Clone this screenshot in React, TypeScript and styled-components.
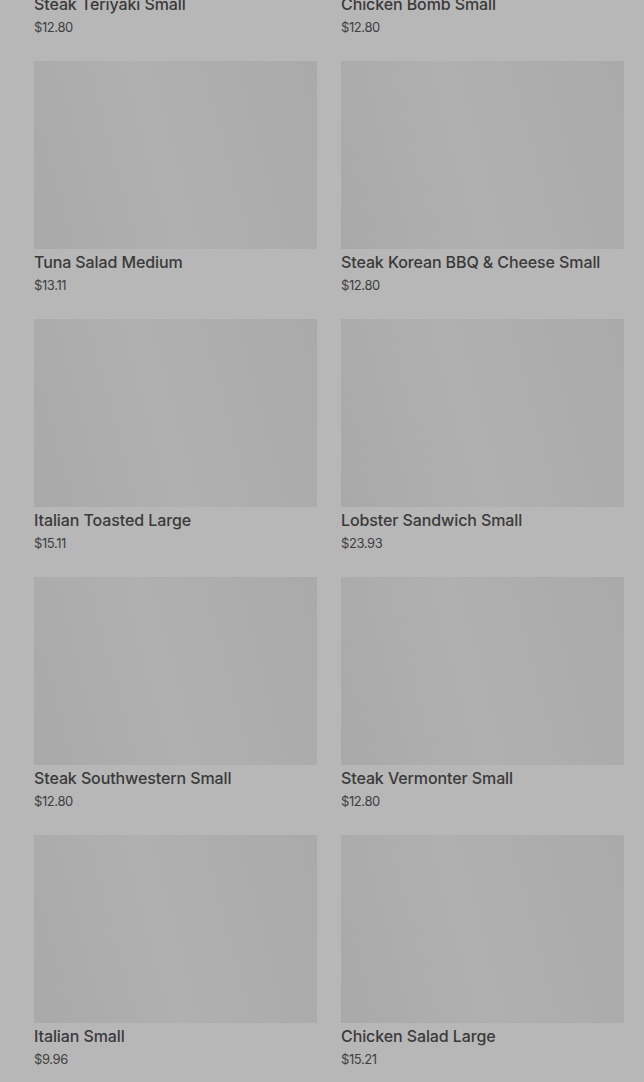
import React from "react";
import styled, { createGlobalStyle } from "styled-components";

const Global = createGlobalStyle`
  html, body { margin: 0; padding: 0; background: #b7b7b7; overflow: hidden; }
  body { font-family: Inter, "Noto Sans", sans-serif; }
`;

const Page = styled.div`
  background: #b7b7b7;
  height: 1082px;
  overflow: hidden;
`;

const Grid = styled.div`
  display: grid;
  grid-template-columns: 283px 283px;
  column-gap: 24px;
  row-gap: 25px;
  padding: 0 20px 0 34px;
  margin-top: -197px;
`;

const Card = styled.div`
  display: flex;
  flex-direction: column;
`;

const Thumb = styled.div`
  height: 188px;
  background: linear-gradient(
    75deg,
    #a9a9a9 0%,
    #adadad 25%,
    #b0b0b0 45%,
    #adadad 70%,
    #aaaaaa 100%
  );
`;

const Title = styled.div`
  margin-top: 3px;
  font-size: 16px;
  line-height: 20px;
  font-weight: 500;
  color: #3a3a3a;
  letter-spacing: -0.1px;
  white-space: nowrap;
`;

const Price = styled.div`
  margin-top: 4px;
  font-size: 13px;
  line-height: 18px;
  font-weight: 400;
  color: #3f3f3f;
  letter-spacing: -0.4px;
`;

const items = [
  ["Steak Teriyaki Small", "$12.80"],
  ["Chicken Bomb Small", "$12.80"],
  ["Tuna Salad Medium", "$13.11"],
  ["Steak Korean BBQ & Cheese Small", "$12.80"],
  ["Italian Toasted Large", "$15.11"],
  ["Lobster Sandwich Small", "$23.93"],
  ["Steak Southwestern Small", "$12.80"],
  ["Steak Vermonter Small", "$12.80"],
  ["Italian Small", "$9.96"],
  ["Chicken Salad Large", "$15.21"],
];

export default function App() {
  return (
    <Page>
      <Global />
      <Grid>
        {items.map(([name, price]) => (
          <Card key={name}>
            <Thumb />
            <Title>{name}</Title>
            <Price>{price}</Price>
          </Card>
        ))}
      </Grid>
    </Page>
  );
}
